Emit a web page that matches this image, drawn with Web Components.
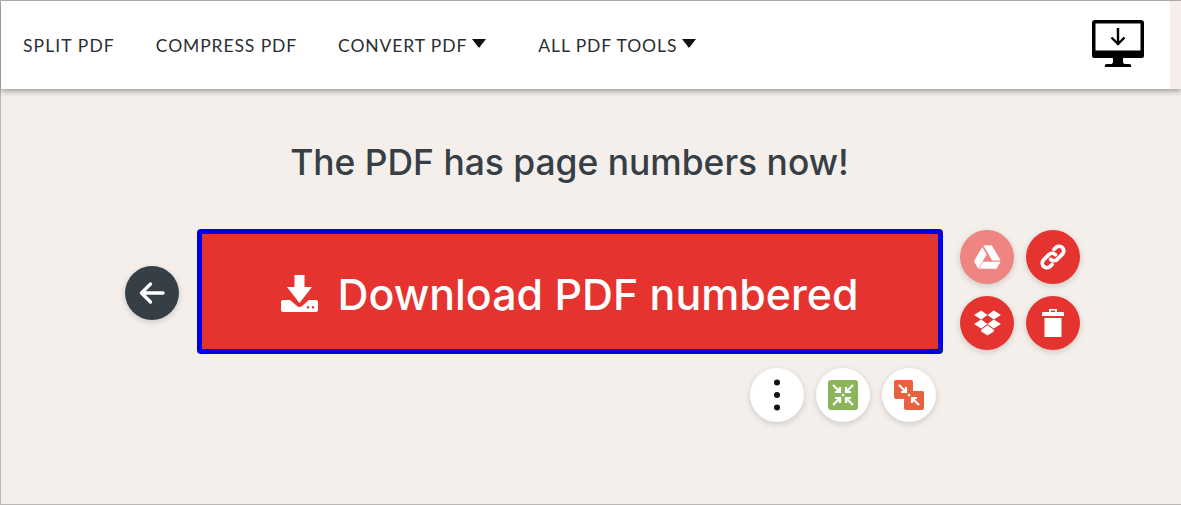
<!DOCTYPE html>
<html>
<head>
<meta charset="utf-8">
<title>PDF numbered</title>
<style>
  html, body { margin: 0; height: 100%; }
  body { background: #f4efeb; overflow: hidden; }
</style>
</head>
<body>
<pdf-page>
  <top-nav>
    <nav-link>SPLIT PDF</nav-link>
    <nav-link>COMPRESS PDF</nav-link>
    <nav-link caret>CONVERT PDF</nav-link>
    <nav-link caret>ALL PDF TOOLS</nav-link>
  </top-nav>
  <result-panel heading="The PDF has page numbers now!"></result-panel>
</pdf-page>

<script>
class PdfPage extends HTMLElement {
  constructor() {
    super();
    this.attachShadow({ mode: 'open' }).innerHTML = `
      <style>
        :host {
          display: block;
          box-sizing: border-box;
          height: 505px;
          border: 1px solid #b9b6b3;
          border-right: 0;
          background: #f4efeb;
          font-family: "Lato", "Liberation Sans", sans-serif;
        }
      </style>
      <slot></slot>`;
  }
}

class TopNav extends HTMLElement {
  constructor() {
    super();
    this.attachShadow({ mode: 'open' }).innerHTML = `
      <style>
        :host {
          display: flex;
          height: 88px;
          box-shadow: 0 2px 6px rgba(0,0,0,.38);
          position: relative;
        }
        .bar {
          flex: 1;
          display: flex;
          align-items: center;
          background: #fff;
          padding: 0 26px 0 22px;
        }
        .links { display: flex; flex: 1; margin-top: 1px; }
        .strip { width: 11px; background: #f5eeea; }
        svg { display: block; width: 52px; height: 48px; margin-top: -2px; }
      </style>
      <div class="bar">
        <div class="links"><slot></slot></div>
        <svg viewBox="0 0 52 48">
          <path fill="#000" fill-rule="evenodd" d="M3 0h46a3 3 0 0 1 3 3v33a2 2 0 0 1-2 2H31v4l1 2h5a2 2 0 0 1 2 3H13a2 2 0 0 1 2-3h5l1-2v-4H2a2 2 0 0 1-2-2V3a3 3 0 0 1 3-3zM3.500 3.500v27h45v-27z"/>
          <path fill="none" stroke="#000" stroke-width="2.400" d="M26 8v16M19.500 17.500l6.500 6.500 6.500-6.500"/>
        </svg>
      </div>
      <div class="strip"></div>`;
  }
}

class NavLink extends HTMLElement {
  constructor() {
    super();
    const caret = this.hasAttribute('caret');
    this.attachShadow({ mode: 'open' }).innerHTML = `
      <style>
        :host {
          display: flex;
          align-items: center;
          margin-right: 41px;
          font-size: 17.500px;
          letter-spacing: .9px;
          color: #2b2e32;
          white-space: nowrap;
        }
        :host(:first-child) { letter-spacing: 1.100px; }
        :host([caret]) { margin-right: 52px; }
        svg { width: 14px; height: 9px; margin: -5px 0 0 5px; }
      </style>
      <slot></slot>
      ${caret ? '<svg viewBox="0 0 14 9"><path fill="#111" d="M0 0h14L7 9z"/></svg>' : ''}`;
  }
}

class RoundBtn extends HTMLElement {
  constructor() {
    super();
    this.attachShadow({ mode: 'open' }).innerHTML = `
      <style>
        :host {
          display: flex;
          align-items: center;
          justify-content: center;
          width: 54px;
          height: 54px;
          border-radius: 50%;
          background: var(--bg, #e53330);
          box-shadow: 0 2px 6px rgba(0,0,0,.16);
        }
        ::slotted(svg) { display: block; }
      </style>
      <slot></slot>`;
  }
}

class DownloadButton extends HTMLElement {
  constructor() {
    super();
    this.attachShadow({ mode: 'open' }).innerHTML = `
      <style>
        :host {
          display: flex;
          align-items: center;
          justify-content: center;
          box-sizing: border-box;
          width: 746px;
          height: 125px;
          background: #e53330;
          border: 5px solid #0000e6;
          border-radius: 4px;
          color: #fff;
          font-family: "Inter", "Lato", sans-serif;
          font-size: 42.900px;
          font-weight: 500;
          white-space: nowrap;
        }
        svg { width: 37px; height: 37px; margin: 4px 19px 0 0; }
        .label { margin-top: 4px; }
      </style>
      <svg viewBox="0 0 37 37">
        <path fill="#fff" d="M13.500 0h10v12h7.500L18.500 28 6 12h7.500z"/>
        <path fill="#fff" fill-rule="evenodd" d="M2 25h7l7 6q2.500 2 5 0l7-6h7a2 2 0 0 1 2 2v8a2 2 0 0 1-2 2H2a2 2 0 0 1-2-2v-8a2 2 0 0 1 2-2zM27 31a1.300 1.300 0 1 0 .01 0zM32 31a1.300 1.300 0 1 0 .01 0z"/>
      </svg>
      <span class="label"><slot></slot></span>`;
  }
}

class ResultPanel extends HTMLElement {
  constructor() {
    super();
    this.attachShadow({ mode: 'open' }).innerHTML = `
      <style>
        :host { display: block; }
        h1 {
          margin: 0;
          padding: 52px 0 0 0;
          width: 1137px;
          text-align: center;
          font-family: "Inter", "Lato", sans-serif;
          font-size: 35.400px;
          line-height: 44px;
          font-weight: 500;
          color: #363e46;
        }
        .row {
          display: flex;
          align-items: flex-start;
          margin: 44px 0 0 124px;
        }
        .back { margin: 37px 18px 0 0; --bg: #363e46; }
        .side {
          display: grid;
          grid-template-columns: 54px 54px;
          gap: 12px;
          margin: 1px 0 0 17px;
        }
        .drive { --bg: #ee8580; }
        .extras {
          display: flex;
          justify-content: flex-end;
          gap: 12px;
          --bg: #fff;
          margin: 14px 0 0 0;
          width: 935px;
        }
      </style>
      <h1 id="title"></h1>
      <div class="row">
        <round-btn class="back">
          <svg width="28" height="24" viewBox="0 0 28 24"><path fill="none" stroke="#fff" stroke-width="3.400" stroke-linecap="round" stroke-linejoin="round" d="M25 12H4M12.500 3 3.500 12l9 9"/></svg>
        </round-btn>
        <download-button>Download PDF numbered</download-button>
        <div class="side">
          <round-btn class="drive">
            <svg width="27" height="24" viewBox="0 0 32 28"><path fill="#fff" d="M11 0h10l10.500 18h-10zM9.800 2 0 19l5 9 10-17zM10.500 19.500H31.500L26.500 28H6z"/></svg>
          </round-btn>
          <round-btn>
            <svg width="28" height="28" viewBox="0 0 30 30"><g fill="none" stroke="#fff" stroke-width="4" stroke-linecap="round"><path d="M12.500 17.500a5 5 0 0 0 7 0l6-6a5 5 0 0 0-7-7l-2.500 2.500"/><path d="M17.500 12.500a5 5 0 0 0-7 0l-6 6a5 5 0 0 0 7 7l2.500-2.500"/></g></svg>
          </round-btn>
          <round-btn>
            <svg width="27" height="26" viewBox="0 0 30 28"><path fill="#fff" d="M8 0l7 5-7 5-8-5zM22 0l8 5-8 5-7-5zM0 15l8-5 7 5-7 5zM22 10l8 5-8 5-7-5zM8 21.500l7-5 7 5 0 2-7 4.500-7-4.500z"/></svg>
          </round-btn>
          <round-btn>
            <svg width="22" height="28" viewBox="0 0 22 28"><path fill="#fff" d="M7 0h8v3h6a1 1 0 0 1 1 1v3H0V4a1 1 0 0 1 1-1h6zM9 1.500V3h4V1.500zM2.500 9h17v19h-17z"/></svg>
          </round-btn>
        </div>
      </div>
      <div class="extras">
        <round-btn>
          <svg width="6" height="32" viewBox="0 0 6 32"><circle cx="3" cy="3.500" r="3" fill="#111"/><circle cx="3" cy="16" r="3" fill="#111"/><circle cx="3" cy="28.500" r="3" fill="#111"/></svg>
        </round-btn>
        <round-btn>
          <svg width="30" height="30" viewBox="0 0 30 30">
            <rect width="30" height="30" rx="3" fill="#8ab55a"/>
            <g fill="none" stroke="#fff" stroke-width="2.200"><path d="M5 5l7 7M12 7v5H7M25 5l-7 7M18 7v5h5M5 25l7-7M12 23v-5H7M25 25l-7-7M18 23v-5h5"/></g>
            <circle cx="15" cy="15" r="1.300" fill="#fff"/>
          </svg>
        </round-btn>
        <round-btn>
          <svg width="30" height="30" viewBox="0 0 30 30">
            <rect width="19" height="19" rx="2" fill="#e8623f"/>
            <rect x="10" y="11" width="20" height="19" rx="2" fill="#e8623f"/>
            <g fill="none" stroke="#fff" stroke-width="2.200"><path d="M5 5l7 7M12 7v5H7M25 25l-7-7M18 23v-5h5"/></g>
            <circle cx="15" cy="15" r="1.300" fill="#fff"/>
          </svg>
        </round-btn>
      </div>`;
    this.shadowRoot.getElementById('title').textContent = this.getAttribute('heading');
  }
}

customElements.define('pdf-page', PdfPage);
customElements.define('top-nav', TopNav);
customElements.define('nav-link', NavLink);
customElements.define('round-btn', RoundBtn);
customElements.define('download-button', DownloadButton);
customElements.define('result-panel', ResultPanel);
</script>
</body>
</html>
